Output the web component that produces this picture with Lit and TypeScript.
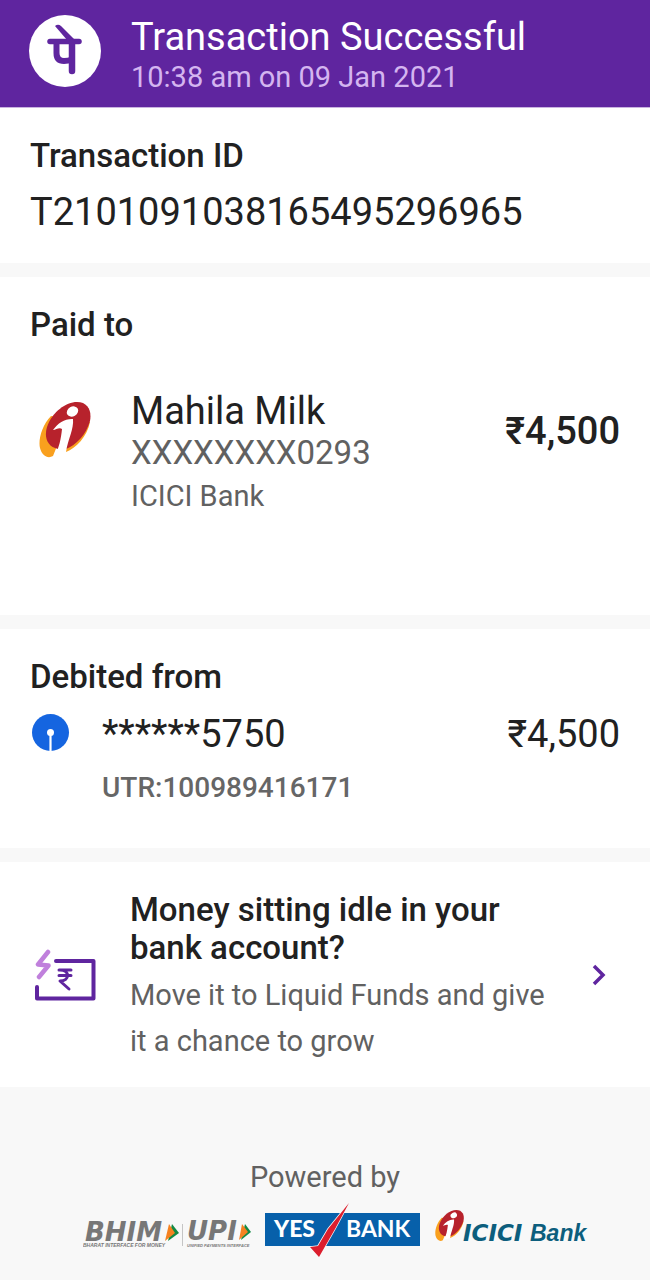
import { LitElement, html, css, svg } from "lit";
import { customElement } from "lit/decorators.js";

const iciciMark = svg`
  <path d="M12 14C3 23-1 38 1 46C3 54 9 57 14 54L18 44L27 50C37 46 48 35 51 20Z" fill="#f9a01e"/>
  <path d="M19 47C8 45 5 35 8 25C13 10 27 0 38 0C49 0 53 9 51 19C47 33 37 43 27 47Z" fill="#b7222c"/>
  <ellipse cx="33.500" cy="9.500" rx="6" ry="4.800" transform="rotate(-30 33.500 9.500)" fill="#fff"/>
  <path d="M14 28C19 21 26 16.500 34 17C35 27 29 37 27 50L16 53C20 46 22 37 23 27C20 25 17 28 14 28Z" fill="#fff"/>`;

@customElement("app-root")
export class AppRoot extends LitElement {
  static styles = css`
    :host {
      display: block;
      min-height: 100vh;
      background: #f8f8f8;
      color: #212121;
      font-family: Roboto, "Noto Sans", sans-serif;
    }
    h1, h2, h3, p { margin: 0; font-weight: 400; }
    svg { display: block; flex: none; }
    .header {
      display: flex;
      align-items: flex-start;
      gap: 30px;
      padding: 15px 29px 12px;
      background: #5f259f;
      border-bottom: 1px solid #c9b3e0;
      color: #fff;
    }
    .title { font-size: 38px; line-height: 44px; }
    .date { font-size: 29px; line-height: 36px; color: #d4b5f0; }
    .sections { display: grid; gap: 14px; }
    .section { background: #fff; padding: 28px 30px 29px; }
    .section h2 { font-size: 33px; line-height: 40px; font-weight: 500; }
    .value { font-size: 38px; line-height: 44px; }
    .id { margin-top: 14px; }
    .row { display: flex; }
    .grow { flex: 1; min-width: 0; }
    .paid { padding-bottom: 96px; }
    .payee { margin-top: 44px; gap: 40px; align-items: flex-start; }
    .payee svg { margin: 13px 0 0 9px; }
    .payee .amount { margin-top: 20px; font-weight: 500; }
    .account { font-size: 33px; line-height: 40px; color: #616161; }
    .bank { font-size: 29px; line-height: 46px; color: #616161; }
    .debit { padding-bottom: 42px; }
    .source { margin-top: 15px; gap: 32px; }
    .source svg { margin: 2px 0 0 2px; }
    .utr { margin-top: 14px; font-size: 28px; line-height: 36px; font-weight: 500; color: #666; }
    .offer {
      display: flex;
      align-items: center;
      gap: 34px;
      padding: 29px 43px 23px 34px;
      background: #fff;
      color: inherit;
      text-decoration: none;
    }
    .offer h3 { font-size: 33px; line-height: 38px; font-weight: 500; }
    .offer p { font-size: 29px; line-height: 46px; margin-top: 5px; color: #616161; }
    .footer { padding: 72px 30px 20px; text-align: center; }
    .footer p { font-size: 29px; line-height: 36px; color: #616161; }
    .logos { display: flex; justify-content: center; gap: 14px; margin: 8px 0 0 23px; }
  `;

  render() {
    return html`
      <header class="header">
        <svg width="72" height="72" viewBox="0 0 72 72" role="img" aria-label="PhonePe">
          <circle cx="36" cy="36" r="36" fill="#fff"/>
          <path d="M26 11Q29 8.500 32 11L46 25H38Z" fill="#5f259f"/>
          <g fill="none" stroke="#5f259f">
            <path d="M21 26.500H50" stroke-width="5.500" stroke-linecap="round"/>
            <path d="M27.500 28V38Q27.500 46 35 46Q39 46 43 44.500" stroke-width="6"/>
            <path d="M43 28V56" stroke-width="6.500" stroke-linecap="round"/>
          </g>
        </svg>
        <div>
          <h1 class="title">Transaction Successful</h1>
          <p class="date">10:38 am on 09 Jan 2021</p>
        </div>
      </header>
      <main class="sections">
        <section class="section">
          <h2>Transaction ID</h2>
          <p class="value id">T2101091038165495296965</p>
        </section>
        <section class="section paid">
          <h2>Paid to</h2>
          <div class="row payee">
            <svg width="52" height="56" viewBox="0 0 52 56" role="img" aria-label="ICICI Bank">${iciciMark}</svg>
            <div class="grow">
              <p class="value">Mahila Milk</p>
              <p class="account">XXXXXXXX0293</p>
              <p class="bank">ICICI Bank</p>
            </div>
            <p class="value amount">₹4,500</p>
          </div>
        </section>
        <section class="section debit">
          <h2>Debited from</h2>
          <div class="row source">
            <svg width="38" height="38" viewBox="0 0 38 38" role="img" aria-label="State Bank of India">
              <circle cx="18.500" cy="18.500" r="18.500" fill="#1565e0"/>
              <circle cx="18.500" cy="18.500" r="3.500" fill="#fff"/>
              <path d="M18.500 18V38" stroke="#fff" stroke-width="2.200"/>
            </svg>
            <div class="grow">
              <p class="value">******5750</p>
              <p class="utr">UTR:100989416171</p>
            </div>
            <p class="value">₹4,500</p>
          </div>
        </section>
        <a class="offer" href="#liquid-funds">
          <svg width="62" height="58" viewBox="0 0 62 58" aria-hidden="true">
            <path d="M22 12H59.500V49.500H3V38" fill="none" stroke="#5f259f" stroke-width="4" stroke-linecap="round" stroke-linejoin="round"/>
            <path d="M14 3L4 15.500L14.500 16.500L5 28" fill="none" stroke="#c080dc" stroke-width="4.500" stroke-linecap="round" stroke-linejoin="round"/>
            <path d="M25 21H37M25 26.500H37M26 21C36 21 36 32 26 32L35 40" fill="none" stroke="#5f259f" stroke-width="3" stroke-linecap="round" stroke-linejoin="round"/>
          </svg>
          <div class="grow">
            <h3>Money sitting idle in your bank account?</h3>
            <p>Move it to Liquid Funds and give it a chance to grow</p>
          </div>
          <svg width="16" height="30" viewBox="0 0 16 30" aria-hidden="true">
            <path d="M3 3L12 12L3 21" fill="none" stroke="#5f259f" stroke-width="3.500"/>
          </svg>
        </a>
      </main>
      <footer class="footer">
        <p>Powered by</p>
        <div class="logos">
          <svg width="168" height="56" viewBox="0 0 168 56" role="img" aria-label="BHIM UPI">
            <g font-style="italic" font-weight="700" fill="#777">
              <text x="2" y="38" font-family="DejaVu Sans" font-size="26">BHIM</text>
              <text x="104" y="37" font-family="DejaVu Sans" font-size="26">UPI</text>
              <text x="0" y="44" font-family="Liberation Sans" font-size="5">BHARAT INTERFACE FOR MONEY</text>
              <text x="104" y="44" font-family="Liberation Sans" font-size="4">UNIFIED PAYMENTS INTERFACE</text>
            </g>
            <path d="M89 21L96 30L85 38Z" fill="#138a45"/>
            <path d="M86 21L92 30L82 38Z" fill="#f58220"/>
            <path d="M99.500 21V43" stroke="#c5c5c5"/>
            <path d="M162 21L168 29L158 37Z" fill="#138a45"/>
            <path d="M159 21L165 29L156 37Z" fill="#f58220"/>
          </svg>
          <svg width="156" height="56" viewBox="0 0 156 56" role="img" aria-label="Yes Bank">
            <path d="M0 10H155V43H0Z" fill="#0760aa"/>
            <g font-family="Lato" font-weight="900" fill="#fff">
              <text x="9" y="34" font-size="23">YES</text>
              <text x="81" y="34" font-size="23" font-weight="700">BANK</text>
            </g>
            <path d="M84 0L70 26L54 54L45 44L53 43L63 26Z" fill="#dc1e2d" stroke="#f8f8f8" stroke-width="1.500" paint-order="stroke"/>
          </svg>
          <svg width="156" height="56" viewBox="0 0 156 56" role="img" aria-label="ICICI Bank">
            <g transform="translate(0 7) scale(.56)">${iciciMark}</g>
            <g font-style="italic" font-weight="700" fill="#0c5e7d">
              <text x="28" y="38" font-family="DejaVu Sans" font-size="23">ICICI</text>
              <text x="95" y="38" font-family="Liberation Sans" font-size="23">Bank</text>
            </g>
          </svg>
        </div>
      </footer>`;
  }
}
